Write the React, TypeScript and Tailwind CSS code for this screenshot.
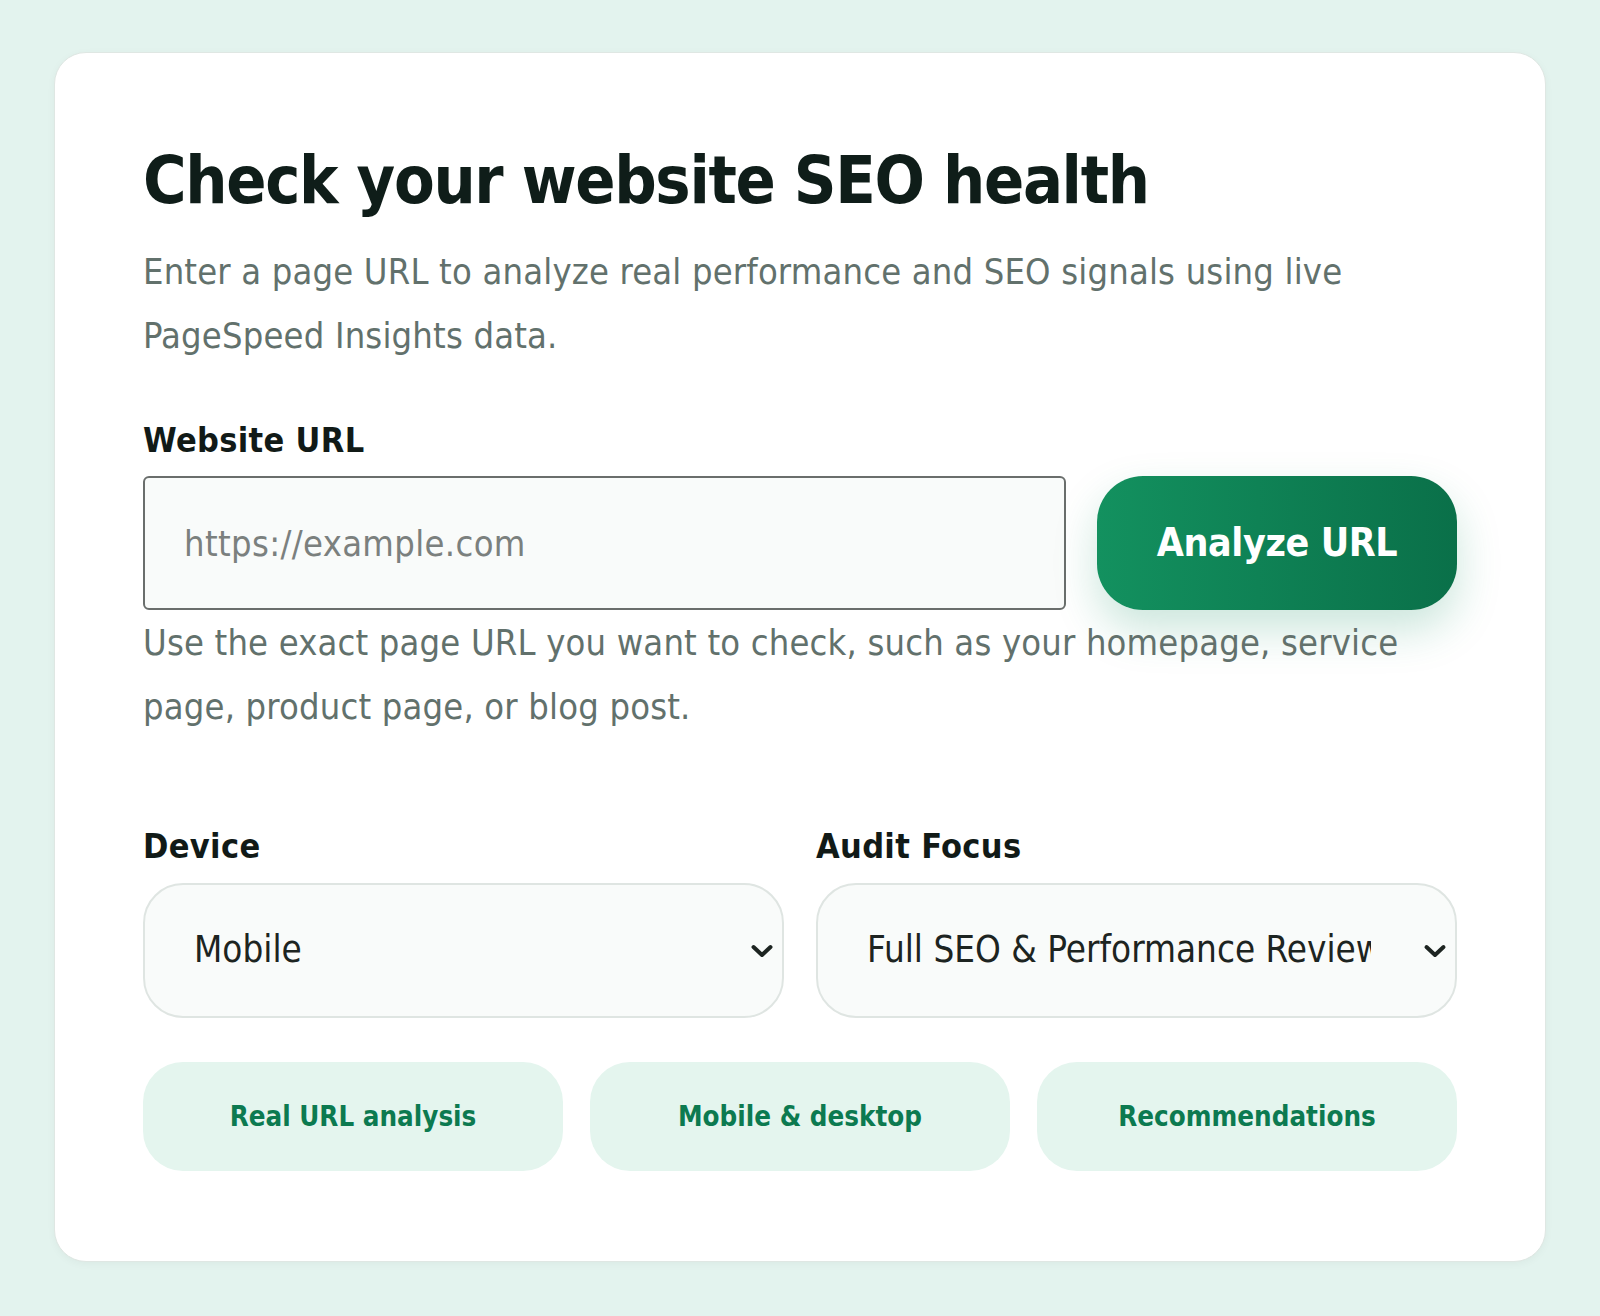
const font = "[font-family:'DejaVu_Sans_Condensed','DejaVu_Sans',sans-serif]";

const features = ["Real URL analysis", "Mobile & desktop", "Recommendations"];

function Chevron() {
  return (
    <svg
      width="24"
      height="14"
      viewBox="0 0 24 14"
      fill="none"
      stroke="currentColor"
      strokeWidth="4"
      strokeLinecap="round"
      strokeLinejoin="round"
      className="absolute right-[8px] top-1/2 -translate-y-1/2 text-[#1d2421]"
    >
      <path d="M3.5 3 12 11l8.5-8" />
    </svg>
  );
}

function FakeSelect({ label, value }: { label: string; value: string }) {
  return (
    <div className="flex-1 min-w-0">
      <div className="text-[34px] leading-[40px] font-bold tracking-[0.01em] text-[#111a17]">{label}</div>
      <div className="relative mt-[17px] h-[135px] rounded-[40px] border-2 border-[#dfe5e2] bg-[#f9fbfa] pl-[49px] pr-[84px] flex items-center">
        <span className="block min-w-0 overflow-hidden whitespace-nowrap text-[36.5px] text-[#1d2421]">{value}</span>
        <Chevron />
      </div>
    </div>
  );
}

export default function App() {
  return (
    <div className={`min-h-screen bg-[#e3f3ee] px-[54px] pt-[52px] pb-[56px] ${font}`}>
      <div className="rounded-[32px] border border-[#dfe7e3] bg-white px-[88px] pt-[90px] pb-[90px] shadow-[0_2px_8px_rgba(0,0,0,0.04)]">
        <h1 className="text-[66px] leading-[76px] font-bold tracking-[-0.02em] text-[#0f1d19]">
          Check your website SEO health
        </h1>
        <p className="mt-[21px] text-[36px] leading-[64px] tracking-[0.005em] text-[#62716c]">
          Enter a page URL to analyze real performance and SEO signals using live PageSpeed Insights data.
        </p>

        <div className="mt-[52px] text-[34px] leading-[40px] font-bold tracking-[0.01em] text-[#111a17]">Website URL</div>
        <div className="mt-[16px] flex gap-[31px]">
          <input
            type="text"
            placeholder="https://example.com"
            className="h-[134px] flex-1 min-w-0 rounded-[6px] border-2 border-[#6a6e6c] bg-[#f9fbfa] px-[39px] text-[36px] tracking-[0.01em] text-[#1d2421] placeholder:text-[#7b807e] outline-none"
          />
          <button className="h-[134px] w-[360px] shrink-0 rounded-[46px] bg-gradient-to-r from-[#13915f] to-[#0a7049] text-[39px] font-bold tracking-[-0.01em] text-white shadow-[0_20px_44px_rgba(16,140,96,0.22)]">
            Analyze URL
          </button>
        </div>
        <p className="mt-[1px] text-[36px] leading-[64px] tracking-[0.005em] text-[#62716c]">
          Use the exact page URL you want to check, such as your homepage, service page, product page, or blog post.
        </p>

        <div className="mt-[87px] flex gap-[32px]">
          <FakeSelect label="Device" value="Mobile" />
          <FakeSelect label="Audit Focus" value="Full SEO & Performance Review" />
        </div>

        <div className="mt-[44px] grid grid-cols-3 gap-[27px]">
          {features.map((f) => (
            <div
              key={f}
              className="flex h-[109px] items-center justify-center rounded-[40px] bg-[#e4f5ee] text-[27.5px] font-bold text-[#0c7a50]"
            >
              {f}
            </div>
          ))}
        </div>
      </div>
    </div>
  );
}
